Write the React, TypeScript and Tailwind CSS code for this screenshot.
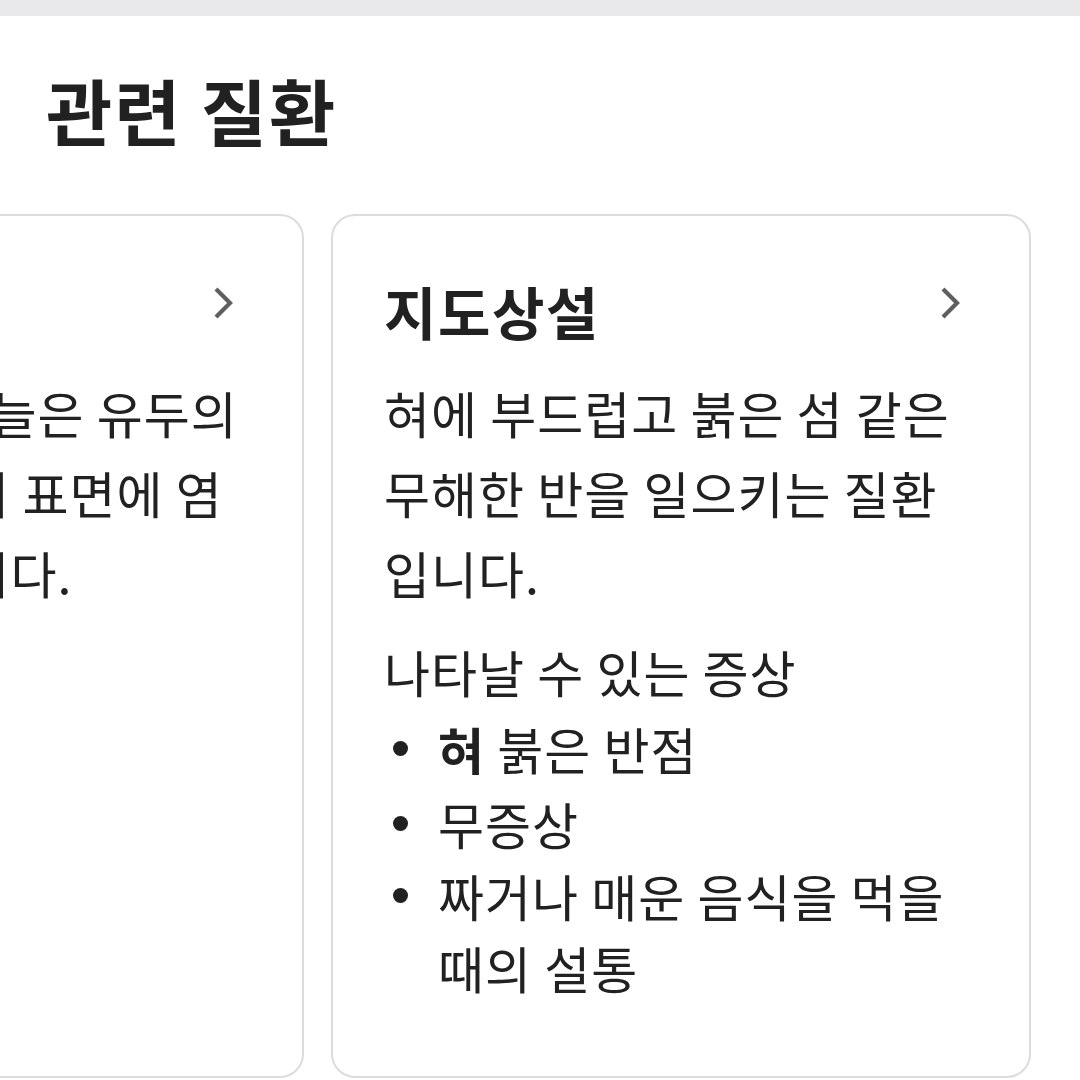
import React from "react";

const Chevron = () => (
  <svg width="56" height="56" viewBox="0 0 24 24" fill="none" stroke="#5f5f5f" strokeWidth="1.8" strokeLinecap="butt" strokeLinejoin="miter">
    <path d="m9 18 6-6-6-6" />
  </svg>
);

const font = { fontFamily: '"Noto Sans CJK KR", "Noto Sans", sans-serif' };

const Dot = () => (
  <span className="w-[54px] shrink-0 h-[72px] flex items-center pl-[9px]">
    <span className="w-[15px] h-[15px] rounded-full bg-[#212121]" />
  </span>
);

export default function App() {
  return (
    <div className="w-[1080px] h-[1080px] overflow-hidden bg-white text-[#212121]" style={font}>
      <div className="h-[16px] bg-[#e9e9ec]" />
      <h2 className="pl-[46px] pt-[55px] text-[72px] leading-[76px] font-bold tracking-[2px]">관련 질환</h2>
      <div className="mt-[67px] overflow-hidden">
        <div className="flex gap-[27px] ml-[-396px]">
          <div className="w-[700px] h-[864px] shrink-0 rounded-[24px] border-2 border-[#dcdcdc] px-[51px]">
            <div className="flex items-start justify-between pt-[59px]">
              <span className="mt-[3px] text-[57px] leading-[64px] font-bold tracking-[1.5px]">설염</span>
              <Chevron />
            </div>
            <p className="mt-[30px] text-[50px] leading-[80px] tracking-[1px] whitespace-nowrap">
              <span className="block">혀 위에 있는, 가늘은 유두의</span>
              <span className="block">위축이 되어 혀의 표면에 염</span>
              <span className="block">증이 생긴 것입니다.</span>
            </p>
          </div>
          <div className="w-[700px] h-[864px] shrink-0 rounded-[24px] border-2 border-[#dcdcdc] px-[51px]">
            <div className="flex items-start justify-between pt-[59px]">
              <span className="mt-[3px] text-[57px] leading-[64px] font-bold tracking-[1.5px]">지도상설</span>
              <Chevron />
            </div>
            <p className="mt-[30px] text-[50px] leading-[80px] tracking-[1px]">
              혀에 부드럽고 붉은 섬 같은 무해한 반을 일으키는 질환입니다.
            </p>
            <p className="mt-[23px] text-[50px] leading-[73px] tracking-[1px]">나타날 수 있는 증상</p>
            <ul className="text-[50px] leading-[72px] tracking-[1px]">
              <li className="flex pt-[4px]">
                <Dot />
                <span><b className="font-bold">혀</b> 붉은 반점</span>
              </li>
              <li className="flex pt-[3px]">
                <Dot />
                <span>무증상</span>
              </li>
              <li className="flex">
                <Dot />
                <span>짜거나 매운 음식을 먹을 때의 설통</span>
              </li>
            </ul>
          </div>
        </div>
      </div>
    </div>
  );
}
